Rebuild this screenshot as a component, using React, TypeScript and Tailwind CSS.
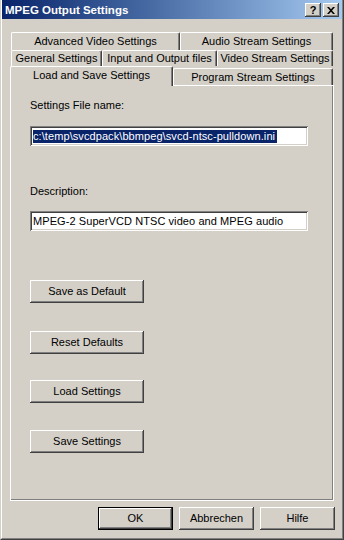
import React from 'react';

const font = { fontFamily: '"Liberation Sans", Arial, sans-serif' };

const raised =
  'bg-[#d4d0c8] shadow-[inset_-1px_-1px_0_#404040,inset_1px_1px_0_#ffffff,inset_-2px_-2px_0_#808080]';
const sunken =
  'bg-white shadow-[inset_1px_1px_0_#808080,inset_-1px_-1px_0_#ffffff,inset_2px_2px_0_#404040,inset_-2px_-2px_0_#d4d0c8]';

function Tab({ label, width, active }: { label: string; width: string; active?: boolean }) {
  return (
    <div
      className={`${width} ${
        active ? 'h-[20px] -mb-px z-10 pb-[3px]' : 'h-full'
      } flex items-center justify-center bg-[#d4d0c8] border-l border-t border-white border-r border-r-[#404040] rounded-tl-[2px] rounded-tr-[2px] shadow-[inset_-1px_0_0_#808080] text-[11px] text-black leading-[13px]`}
    >
      {label}
    </div>
  );
}

function PanelButton({ label, className = '' }: { label: string; className?: string }) {
  return (
    <button
      className={`w-[114px] h-[23px] ${raised} text-[11px] text-black leading-[13px] ${className}`}
    >
      {label}
    </button>
  );
}

function DialogButton({ label, isDefault }: { label: string; isDefault?: boolean }) {
  return (
    <button
      className={`w-[75px] h-[23px] text-[11px] text-black leading-[13px] bg-[#d4d0c8] ${
        isDefault
          ? 'shadow-[inset_0_0_0_1px_#000000,inset_-2px_-2px_0_#404040,inset_2px_2px_0_#ffffff,inset_-3px_-3px_0_#808080]'
          : 'shadow-[inset_-1px_-1px_0_#404040,inset_1px_1px_0_#ffffff,inset_-2px_-2px_0_#808080]'
      }`}
    >
      {label}
    </button>
  );
}

export default function App() {
  return (
    <div className="w-[344px] h-[540px] bg-[#d4d0c8] border-l border-l-[#d4d0c8] border-r border-b border-[#404040] overflow-hidden" style={font}>
      <div className="h-full flex flex-col border-l border-l-white border-r border-b border-[#808080]">
        {/* title bar */}
        <div className="h-[19px] flex items-center bg-gradient-to-r from-[#0a246a] to-[#a6caf0] pl-[3px] pr-[3px]">
          <span className="text-white font-bold text-[11.5px] leading-[14px]">MPEG Output Settings</span>
          <div className="ml-auto flex gap-[2px] mt-px">
            <div className={`w-[16px] h-[14px] ${raised} flex items-center justify-center text-[11px] font-bold leading-none text-black`}>?</div>
            <div className={`w-[16px] h-[14px] ${raised} flex items-center justify-center`}>
              <svg width="8" height="7" viewBox="0 0 8 7">
                <path d="M0 0 L2 0 L4 2.3 L6 0 L8 0 L5 3.5 L8 7 L6 7 L4 4.7 L2 7 L0 7 L3 3.5 Z" fill="#000" />
              </svg>
            </div>
          </div>
        </div>

        {/* tabs */}
        <div className="mt-[13px] pl-[8px] flex flex-col">
          <div className="h-[18px] flex ml-px">
            <Tab label="Advanced Video Settings" width="w-[169px]" />
            <Tab label="Audio Stream Settings" width="w-[153px]" />
          </div>
          <div className="h-[16px] flex ml-px">
            <Tab label="General Settings" width="w-[91px]" />
            <Tab label="Input and Output files" width="w-[115px]" />
            <Tab label="Video Stream Settings" width="w-[116px]" />
          </div>
          <div className="h-[19px] flex items-end relative">
            <Tab label="Load and Save Settings" width="w-[163px]" active />
            <div className="h-[17px]">
              <Tab label="Program Stream Settings" width="w-[160px]" />
            </div>
          </div>

          {/* panel */}
          <div className="w-[324px] h-[416px] border-l border-t border-white border-r border-b border-[#404040] shadow-[inset_-1px_-1px_0_#808080]">
            <div className="pl-[19px] flex flex-col text-[11px] leading-[13px] text-black">
              <div className="mt-[13px] h-[13px]">Settings File name:</div>
              <div className={`mt-[14px] w-[278px] h-[20px] ${sunken} flex items-center pl-[3px]`}>
                <span className="bg-[#0a246a] text-white h-[13px] pr-[2px] tracking-[0.08px]">c:\temp\svcdpack\bbmpeg\svcd-ntsc-pulldown.ini</span>
              </div>
              <div className="mt-[39px] h-[13px]">Description:</div>
              <div className={`mt-[13px] w-[278px] h-[20px] ${sunken} flex items-center pl-[3px]`}>
                <span className="tracking-[0.08px]">MPEG-2 SuperVCD NTSC video and MPEG audio</span>
              </div>
              <PanelButton label="Save as Default" className="mt-[49px]" />
              <PanelButton label="Reset Defaults" className="mt-[28px]" />
              <PanelButton label="Load Settings" className="mt-[26px]" />
              <PanelButton label="Save Settings" className="mt-[27px]" />
            </div>
          </div>
        </div>

        {/* dialog buttons */}
        <div className="mt-[6px] flex justify-end gap-[6px] pr-[7px]">
          <DialogButton label="OK" isDefault />
          <DialogButton label="Abbrechen" />
          <DialogButton label="Hilfe" />
        </div>
      </div>
    </div>
  );
}
